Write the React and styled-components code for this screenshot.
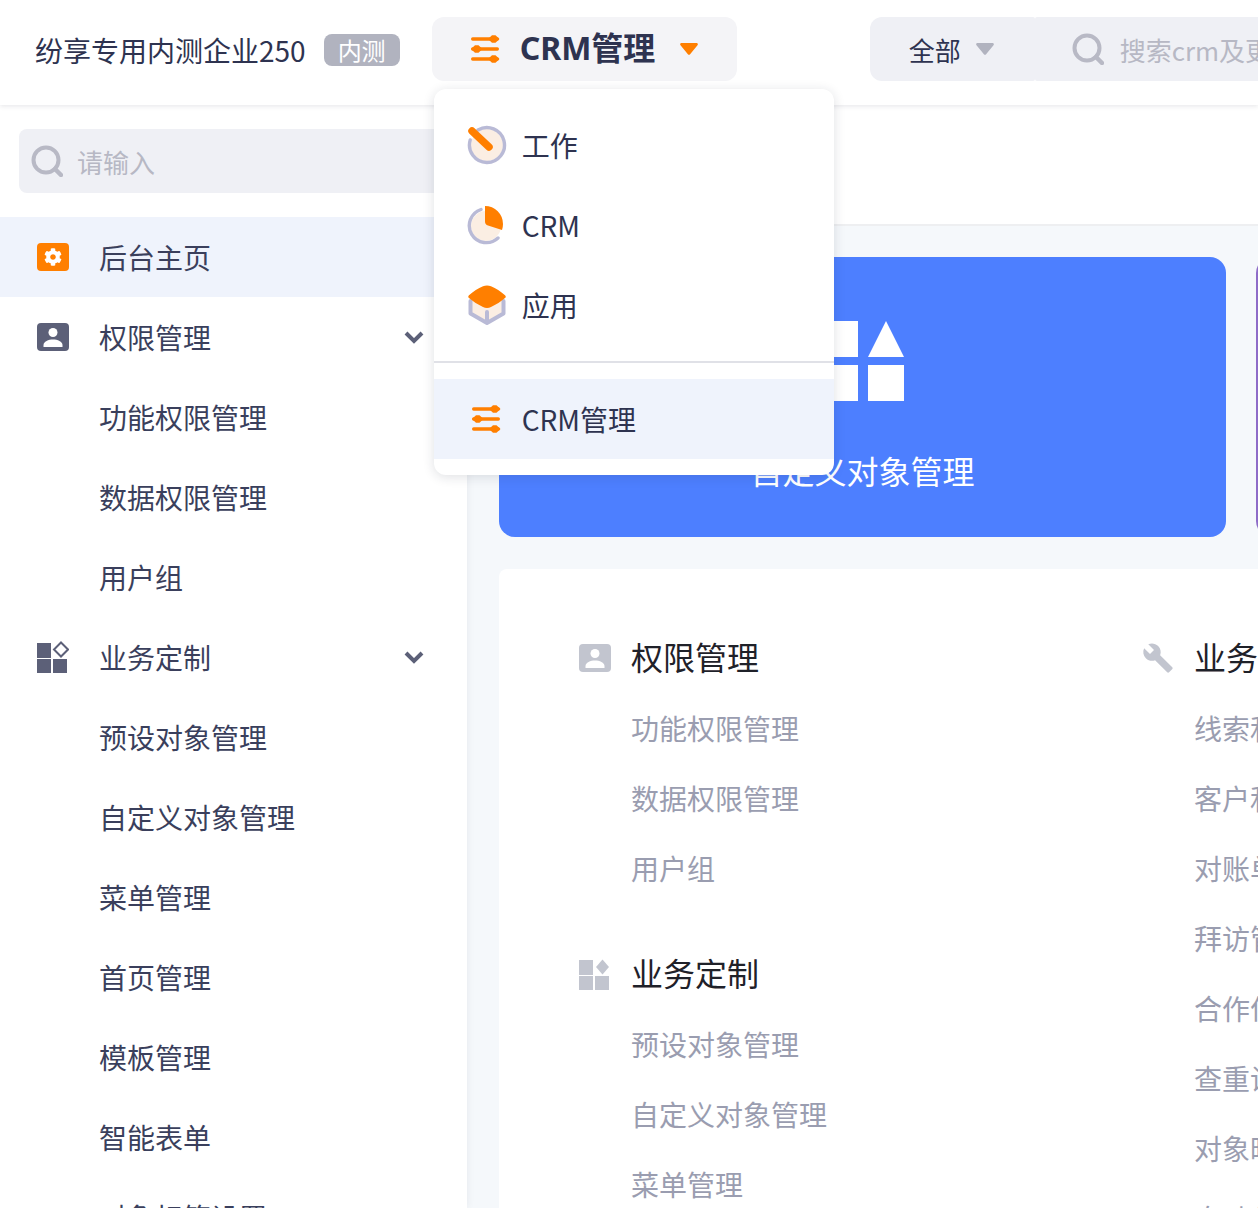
import React from "react";
import styled, { createGlobalStyle } from "styled-components";
import { FaCog } from "react-icons/fa";
import { MdBuild } from "react-icons/md";

const GlobalStyle = createGlobalStyle`
  html, body {
    margin: 0;
    padding: 0;
    height: 100%;
    overflow: hidden;
    background: #fff;
  }
  * {
    box-sizing: border-box;
  }
  body {
    font-family: "Noto Sans CJK SC", "Noto Sans", sans-serif;
    color: #2e3350;
  }
`;

const Page = styled.div`
  width: 1258px;
  height: 1208px;
  overflow: hidden;
  display: flex;
  flex-direction: column;
`;

const Header = styled.header`
  position: relative;
  z-index: 3;
  flex: none;
  height: 105px;
  display: flex;
  align-items: flex-start;
  padding: 17px 0 0 35px;
  background: #fff;
  box-shadow: 0 1px 5px rgba(30, 35, 60, 0.12);
`;

const Company = styled.div`
  height: 68px;
  line-height: 66px;
  font-size: 28px;
  white-space: nowrap;
`;

const Badge = styled.span`
  flex: none;
  width: 76px;
  height: 32px;
  margin: 17px 32px 0 18px;
  border-radius: 8px;
  background: #b1b3bf;
  color: #fff;
  font-size: 24px;
  line-height: 31px;
  text-align: center;
`;

const AppSwitch = styled.div`
  position: relative;
  flex: none;
`;

const AppButton = styled.div`
  width: 305px;
  height: 64px;
  display: flex;
  align-items: center;
  padding-left: 38px;
  border-radius: 12px;
  background: #f4f4f7;
`;

const AppName = styled.span`
  margin: 0 25px 2px 20px;
  font-family: "Noto Sans", "Noto Sans CJK SC", sans-serif;
  font-size: 32px;
  font-weight: 700;
  line-height: 60px;
`;

const Dropdown = styled.div`
  position: absolute;
  top: 72px;
  left: 2px;
  width: 400px;
  padding: 16px 0;
  border-radius: 12px;
  background: #fff;
  box-shadow: 0 2px 12px rgba(30, 35, 60, 0.14);
`;

const DropItem = styled.div`
  height: 80px;
  display: flex;
  align-items: center;
  padding-left: 33px;
  background: ${(p) => (p.$active ? "#eff3fc" : "transparent")};
  font-size: 28px;
`;

const DropIcon = styled.span`
  flex: none;
  width: 55px;
  display: flex;
  align-items: center;
  justify-content: ${(p) => (p.$center ? "center" : "flex-start")};
  padding-right: ${(p) => (p.$center ? "16px" : "0")};
`;

const Divider = styled.div`
  height: 2px;
  margin: 16px 0;
  background: #e0e1e7;
`;

const SearchGroup = styled.div`
  flex: none;
  display: flex;
  width: 600px;
  height: 64px;
  margin-left: 133px;
`;

const Scope = styled.div`
  flex: none;
  width: 165px;
  display: flex;
  align-items: center;
  gap: 15px;
  padding-left: 39px;
  border-radius: 12px 2px 2px 12px;
  background: #eff0f5;
  font-size: 26px;
`;

const SearchBox = styled.div`
  flex: 1;
  display: flex;
  align-items: center;
  gap: 16px;
  padding-left: 37px;
  border-radius: 2px 0 0 2px;
  background: #eff0f5;
`;

const Placeholder = styled.span`
  color: #b7b8c4;
  font-size: 26px;
  white-space: nowrap;
`;

const Body = styled.div`
  flex: 1;
  min-height: 0;
  display: flex;
`;

const Sidebar = styled.aside`
  position: relative;
  z-index: 2;
  flex: none;
  width: 467px;
  padding-top: 24px;
  background: #fff;
  box-shadow: 0 0 8px rgba(30, 35, 60, 0.07);
`;

const SideSearch = styled.div`
  height: 64px;
  margin: 0 19px 24px;
  display: flex;
  align-items: center;
  gap: 14px;
  padding-left: 12px;
  border-radius: 8px;
  background: #eff0f5;
`;

const MenuItem = styled.div`
  height: 80px;
  display: flex;
  align-items: center;
  padding: 0 43px 0 ${(p) => (p.$child ? "99px" : "37px")};
  background: ${(p) => (p.$active ? "#eff3fc" : "transparent")};
  color: #3a3f5c;
  font-size: 28px;
  white-space: nowrap;
`;

const MenuIcon = styled.span`
  flex: none;
  width: 62px;
  display: flex;
  align-items: center;
`;

const Chevron = styled.svg`
  margin-left: auto;
`;

const IconTile = styled.span`
  width: 32px;
  height: 28px;
  display: flex;
  align-items: center;
  justify-content: center;
  border-radius: 4px;
  background: ${(p) => p.$bg};
  color: #fff;
`;

const Main = styled.main`
  flex: 1;
  min-width: 0;
  overflow: hidden;
  background: #f5f8fb;
`;

const TopStrip = styled.div`
  height: 121px;
  background: #fff;
  border-bottom: 2px solid #eeeff1;
`;

const Content = styled.div`
  width: 1400px;
  padding: 31px 0 0 32px;
`;

const Tiles = styled.div`
  display: flex;
  gap: 30px;
`;

const Tile = styled.div`
  flex: none;
  width: 727px;
  height: 280px;
  display: flex;
  flex-direction: column;
  align-items: center;
  padding-top: 64px;
  border-radius: 16px;
  background: ${(p) => p.$bg};
  color: #fff;
`;

const TileTitle = styled.div`
  margin-top: 46px;
  font-size: 32px;
  line-height: 46px;
`;

const Panel = styled.div`
  display: grid;
  grid-template-columns: 563px 1fr;
  margin-top: 32px;
  padding: 53px 0 0 80px;
  border-radius: 8px;
  background: #fff;
`;

const Section = styled.section`
  margin-bottom: 34px;
`;

const SectionTitle = styled.h3`
  height: 72px;
  margin: 0;
  display: flex;
  align-items: center;
  color: #1f2129;
  font-size: 32px;
  font-weight: 400;
`;

const TitleText = styled.span`
  margin-bottom: 4px;
`;

const SectionIcon = styled.span`
  flex: none;
  width: 52px;
  display: flex;
  align-items: center;
`;

const LinkRow = styled.div`
  height: 70px;
  padding-left: 52px;
  color: #9a9db0;
  font-size: 28px;
  line-height: 68px;
  white-space: nowrap;
`;

function TuneIcon() {
  return (
    <svg width="30" height="30" viewBox="0 0 30 30" fill="#ff7f00">
      <rect x="1" y="3.300" width="28" height="3.400" rx="1.700" />
      <rect x="1" y="13.300" width="28" height="3.400" rx="1.700" />
      <rect x="1" y="23.300" width="28" height="3.400" rx="1.700" />
      <path d="M18 5l4-3.800h3.500L29.500 5l-4 3.800H22z" />
      <path d="M1 15l4-3.800h3.500L12.500 15l-4 3.800H5z" />
      <path d="M18 25l4-3.800h3.500L29.500 25l-4 3.800H22z" />
    </svg>
  );
}

function Caret({ color }) {
  return (
    <svg width="18" height="12" viewBox="0 0 18 12" fill={color}>
      <path d="M1.500 0h15c1.200 0 1.800 1.300 1 2.200l-7.400 9c-.6.700-1.600.700-2.200 0l-7.400-9C-.3 1.300.3 0 1.500 0z" />
    </svg>
  );
}

function SearchIcon() {
  return (
    <svg width="32" height="32" viewBox="0 0 32 32" fill="none" stroke="#b8b9c5">
      <circle cx="15" cy="15" r="12.500" strokeWidth="4" />
      <path d="M24 24l6 6" strokeWidth="4.500" strokeLinecap="round" />
    </svg>
  );
}

function WorkIcon() {
  return (
    <svg width="40" height="40" viewBox="0 0 40 40" fill="none">
      <circle cx="20" cy="20" r="16" fill="#fbeee3" />
      <path d="M11 5A17.500 17.500 0 1 1 3.200 15" stroke="#b9bad6" strokeWidth="3.400" strokeLinecap="round" />
      <path d="M5 6l17 16" stroke="#ff7f00" strokeWidth="7.500" strokeLinecap="round" />
    </svg>
  );
}

function PieIcon() {
  return (
    <svg width="40" height="40" viewBox="0 0 40 40" fill="none">
      <circle cx="19" cy="21" r="15" fill="#fbeee3" />
      <path d="M14 4.500A17 17 0 1 0 31 33" stroke="#b9bad6" strokeWidth="3.400" strokeLinecap="round" />
      <path d="M18 1a18 18 0 0 1 18 18c0 2-.3 4-1 6l-14-4.500c-2-.6-3-2-3-4z" fill="#ff7f00" />
    </svg>
  );
}

function BoxIcon() {
  return (
    <svg width="40" height="42" viewBox="0 0 40 42" fill="none">
      <path d="M4 14h31v15L20 38 4 29z" fill="#fbeee3" />
      <path d="M3.500 17v12.500L20 39l16.500-9.500V17M20 28v10" stroke="#b9bad6" strokeWidth="4" strokeLinecap="round" strokeLinejoin="round" />
      <path d="M16 2.200c2.500-1 5.500-1 8 0 5 2 9.500 5 14 9 1 .8 1 2 0 2.800-4 3.500-9 6.500-14 9-2.500 1.200-5.500 1.200-8 0-5-2.500-10-5.500-14-9-1-.8-1-2 0-2.800 4.500-4 9-7 14-9z" fill="#ff7f00" />
    </svg>
  );
}

function Person() {
  return (
    <svg width="22" height="20" viewBox="0 0 22 20" fill="#fff">
      <circle cx="11" cy="5.500" r="4.500" />
      <path d="M1.500 20v-2c0-3.500 5-5.500 9.500-5.500s9.500 2 9.500 5.500v2z" />
    </svg>
  );
}

function BlocksIcon({ color, solid }) {
  return (
    <svg width="32" height="32" viewBox="0 0 32 32" fill={color}>
      <rect x="0" y="2" width="14" height="15" />
      <rect x="0" y="18" width="14" height="14" />
      <rect x="16" y="18" width="14" height="14" />
      {solid ? (
        <path d="M23.500 1.500L30 9l-6.500 7.500L17 9z" />
      ) : (
        <path d="M24 1.500L31 8.500l-7 7-7-7z" fill="none" stroke={color} strokeWidth="2" />
      )}
    </svg>
  );
}

function Shapes() {
  return (
    <svg width="82" height="80" viewBox="0 0 82 80" fill="#fff">
      <rect x="0" y="0" width="36" height="36" />
      <rect x="0" y="44" width="36" height="36" />
      <path d="M64 0l18 36H46z" />
      <rect x="46" y="44" width="36" height="36" />
    </svg>
  );
}

const menu = [
  { label: "权限管理", icon: "person", open: true },
  { label: "功能权限管理" },
  { label: "数据权限管理" },
  { label: "用户组" },
  { label: "业务定制", icon: "blocks", open: true },
  { label: "预设对象管理" },
  { label: "自定义对象管理" },
  { label: "菜单管理" },
  { label: "首页管理" },
  { label: "模板管理" },
  { label: "智能表单" },
  { label: "对象标签设置" },
];

const rightLinks = [
  "线索和公海设置",
  "客户和公海设置",
  "对账单设置",
  "拜访管理",
  "合作伙伴设置",
  "查重设置",
  "对象映射",
  "自动化流程",
];

export default function App() {
  return (
    <Page>
      <GlobalStyle />
      <Header>
        <Company>纷享专用内测企业250</Company>
        <Badge>内测</Badge>
        <AppSwitch>
          <AppButton>
            <TuneIcon />
            <AppName>CRM管理</AppName>
            <Caret color="#ff7f00" />
          </AppButton>
          <Dropdown>
            <DropItem>
              <DropIcon><WorkIcon /></DropIcon>
              工作
            </DropItem>
            <DropItem>
              <DropIcon><PieIcon /></DropIcon>
              CRM
            </DropItem>
            <DropItem>
              <DropIcon><BoxIcon /></DropIcon>
              应用
            </DropItem>
            <Divider />
            <DropItem $active>
              <DropIcon $center><TuneIcon /></DropIcon>
              CRM管理
            </DropItem>
          </Dropdown>
        </AppSwitch>
        <SearchGroup>
          <Scope>
            全部
            <Caret color="#b1b3bf" />
          </Scope>
          <SearchBox>
            <SearchIcon />
            <Placeholder>搜索crm及更多内容</Placeholder>
          </SearchBox>
        </SearchGroup>
      </Header>
      <Body>
        <Sidebar>
          <SideSearch>
            <SearchIcon />
            <Placeholder>请输入</Placeholder>
          </SideSearch>
          <MenuItem $active>
            <MenuIcon>
              <IconTile $bg="#ff7f00"><FaCog size={18} /></IconTile>
            </MenuIcon>
            后台主页
          </MenuItem>
          {menu.map((item) => (
            <MenuItem key={item.label} $child={!item.icon}>
              {item.icon && (
                <MenuIcon>
                  {item.icon === "person" ? (
                    <IconTile $bg="#5c6078"><Person /></IconTile>
                  ) : (
                    <BlocksIcon color="#5c6078" />
                  )}
                </MenuIcon>
              )}
              {item.label}
              {item.open && (
                <Chevron width="20" height="14" viewBox="0 0 20 14" fill="none" stroke="#5c6078" strokeWidth="4">
                  <path d="M2 3l8 8 8-8" />
                </Chevron>
              )}
            </MenuItem>
          ))}
        </Sidebar>
        <Main>
          <TopStrip />
          <Content>
            <Tiles>
              <Tile $bg="#4d7fff">
                <Shapes />
                <TileTitle>自定义对象管理</TileTitle>
              </Tile>
              <Tile $bg="#8e6cc8" />
            </Tiles>
            <Panel>
              <div>
                <Section>
                  <SectionTitle>
                    <SectionIcon>
                      <IconTile $bg="#c2c5cf"><Person /></IconTile>
                    </SectionIcon>
                    <TitleText>权限管理</TitleText>
                  </SectionTitle>
                  <LinkRow>功能权限管理</LinkRow>
                  <LinkRow>数据权限管理</LinkRow>
                  <LinkRow>用户组</LinkRow>
                </Section>
                <Section>
                  <SectionTitle>
                    <SectionIcon><BlocksIcon color="#c2c5cf" solid /></SectionIcon>
                    <TitleText>业务定制</TitleText>
                  </SectionTitle>
                  <LinkRow>预设对象管理</LinkRow>
                  <LinkRow>自定义对象管理</LinkRow>
                  <LinkRow>菜单管理</LinkRow>
                </Section>
              </div>
              <div>
                <Section>
                  <SectionTitle>
                    <SectionIcon><MdBuild size={32} color="#c2c5cf" /></SectionIcon>
                    <TitleText>业务规则</TitleText>
                  </SectionTitle>
                  {rightLinks.map((label) => (
                    <LinkRow key={label}>{label}</LinkRow>
                  ))}
                </Section>
              </div>
            </Panel>
          </Content>
        </Main>
      </Body>
    </Page>
  );
}
